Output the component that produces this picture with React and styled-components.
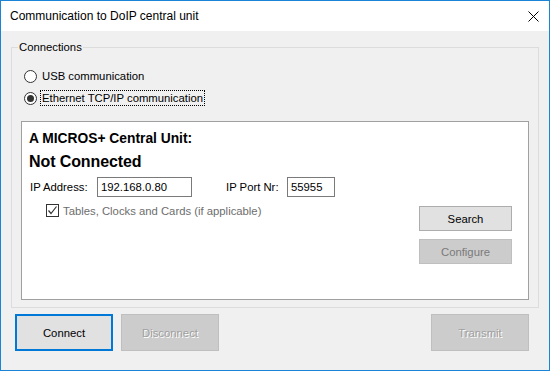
import React from 'react';
import styled, { createGlobalStyle } from 'styled-components';

const GlobalStyle = createGlobalStyle`
  html, body {
    margin: 0;
    padding: 0;
    background: #ffffff;
  }
  body {
    font-family: "Liberation Sans", Arial, sans-serif;
    font-size: 11.3px;
    color: #000;
  }
`;

const Window = styled.div`
  width: 550px;
  height: 371px;
  box-sizing: border-box;
  border: 1px solid #1c84d6;
  display: flex;
  flex-direction: column;
  background: #f0f0f0;
`;

const TitleBar = styled.div`
  height: 30px;
  flex: none;
  background: #ffffff;
  display: flex;
  align-items: center;
  justify-content: space-between;
  padding: 0 10px 0 9px;
  font-size: 12px;
`;

const CloseButton = styled.span`
  display: flex;
  width: 11px;
  height: 11px;
`;

const Body = styled.div`
  flex: 1;
  display: flex;
  flex-direction: column;
  padding: 16px 10px 0 10px;
`;

const GroupBox = styled.div`
  position: relative;
  height: 261px;
  box-sizing: border-box;
  border: 1px solid #dcdcdc;
  padding: 17px 9px 7px 9px;
  display: flex;
  flex-direction: column;
`;

const Legend = styled.span`
  position: absolute;
  top: -8px;
  left: 6px;
  padding: 0 1px;
  background: #f0f0f0;
  line-height: 14px;
`;

const RadioList = styled.div`
  display: flex;
  flex-direction: column;
  padding-left: 3px;
`;

const RadioRow = styled.label`
  height: 22px;
  display: flex;
  align-items: center;
  gap: 4px;
`;

const RadioCircle = styled.span`
  width: 13px;
  height: 13px;
  box-sizing: border-box;
  border-radius: 50%;
  border: 1px solid #333;
  background: #fff;
  display: flex;
  align-items: center;
  justify-content: center;
  &::after {
    content: '';
    width: 7px;
    height: 7px;
    border-radius: 50%;
    background: ${p => (p.$checked ? '#333' : 'transparent')};
  }
`;

const RadioText = styled.span`
  line-height: 14px;
  padding: 0 1px;
  outline: ${p => (p.$focused ? '1px dotted #000' : 'none')};
`;

const Panel = styled.div`
  margin-top: 12px;
  flex: 1;
  background: #fff;
  border: 1px solid #a0a0a0;
  padding: 9px 16px 0 7px;
  display: flex;
  flex-direction: column;
`;

const UnitTitle = styled.div`
  font-weight: bold;
  font-size: 13.8px;
  line-height: 16px;
`;

const Status = styled.div`
  font-weight: bold;
  font-size: 16px;
  line-height: 19px;
  margin-top: 5px;
  letter-spacing: -0.1px;
`;

const FieldRow = styled.div`
  display: flex;
  align-items: center;
  margin-top: 6px;
  padding-left: 1px;
`;

const FieldLabel = styled.span`
  width: ${p => p.$w}px;
  margin-left: ${p => p.$ml || 0}px;
`;

const TextBox = styled.div`
  width: ${p => p.$w}px;
  height: 20px;
  box-sizing: border-box;
  border: 1px solid #7a7a7a;
  padding-left: 3px;
  display: flex;
  align-items: center;
`;

const LowerArea = styled.div`
  display: flex;
  justify-content: space-between;
  align-items: flex-start;
`;

const CheckRow = styled.div`
  display: flex;
  align-items: center;
  gap: 4px;
  margin: 7px 0 0 17px;
  color: #6d6d6d;
`;

const CheckBox = styled.span`
  width: 13px;
  height: 13px;
  box-sizing: border-box;
  border: 1px solid #333;
  background: #fff;
  display: flex;
`;

const ButtonColumn = styled.div`
  display: flex;
  flex-direction: column;
  gap: 8px;
  margin-top: 9px;
`;

const Button = styled.div`
  width: ${p => p.$w}px;
  height: ${p => p.$h}px;
  box-sizing: border-box;
  display: flex;
  align-items: center;
  justify-content: center;
  background: ${p => (p.$disabled ? '#cccccc' : '#e1e1e1')};
  border: ${p =>
    p.$default ? '2px solid #0078d7' : p.$disabled ? '1px solid #bfbfbf' : '1px solid #adadad'};
  color: ${p => (p.$disabled ? (p.$emboss ? '#a0a0a0' : '#7a7a7a') : '#000')};
  text-shadow: ${p => (p.$emboss ? '1px 1px 0 #ffffff' : 'none')};
`;

const ButtonBar = styled.div`
  display: flex;
  align-items: center;
  margin: 6px 10px 0 4px;
  gap: 8px;
`;

const Spacer = styled.div`
  flex: 1;
`;

export default function App() {
  return (
    <>
      <GlobalStyle />
      <Window>
        <TitleBar>
          <span>Communication to DoIP central unit</span>
          <CloseButton>
            <svg width="11" height="11" viewBox="0 0 11 11">
              <path d="M0.5 0.5 L10.5 10.5 M10.5 0.5 L0.5 10.5" stroke="#000" strokeWidth="1" fill="none" />
            </svg>
          </CloseButton>
        </TitleBar>
        <Body>
          <GroupBox>
            <Legend>Connections</Legend>
            <RadioList>
              <RadioRow>
                <RadioCircle />
                <RadioText>USB communication</RadioText>
              </RadioRow>
              <RadioRow>
                <RadioCircle $checked />
                <RadioText $focused>Ethernet TCP/IP communication</RadioText>
              </RadioRow>
            </RadioList>
            <Panel>
              <UnitTitle>A MICROS+ Central Unit:</UnitTitle>
              <Status>Not Connected</Status>
              <FieldRow>
                <FieldLabel $w={67}>IP Address:</FieldLabel>
                <TextBox $w={95}>192.168.0.80</TextBox>
                <FieldLabel $w={61} $ml={34}>IP Port Nr:</FieldLabel>
                <TextBox $w={48}>55955</TextBox>
              </FieldRow>
              <LowerArea>
                <CheckRow>
                  <CheckBox>
                    <svg width="11" height="11" viewBox="0 0 11 11">
                      <path d="M1.5 5.5 L4 8.5 L9.5 1.5" stroke="#333" strokeWidth="1.2" fill="none" />
                    </svg>
                  </CheckBox>
                  <span>Tables, Clocks and Cards (if applicable)</span>
                </CheckRow>
                <ButtonColumn>
                  <Button $w={93} $h={25}>Search</Button>
                  <Button $w={93} $h={25} $disabled>Configure</Button>
                </ButtonColumn>
              </LowerArea>
            </Panel>
          </GroupBox>
          <ButtonBar>
            <Button $w={98} $h={37} $default>Connect</Button>
            <Button $w={98} $h={37} $disabled $emboss>Disconnect</Button>
            <Spacer />
            <Button $w={98} $h={37} $disabled $emboss>Transmit</Button>
          </ButtonBar>
        </Body>
      </Window>
    </>
  );
}
